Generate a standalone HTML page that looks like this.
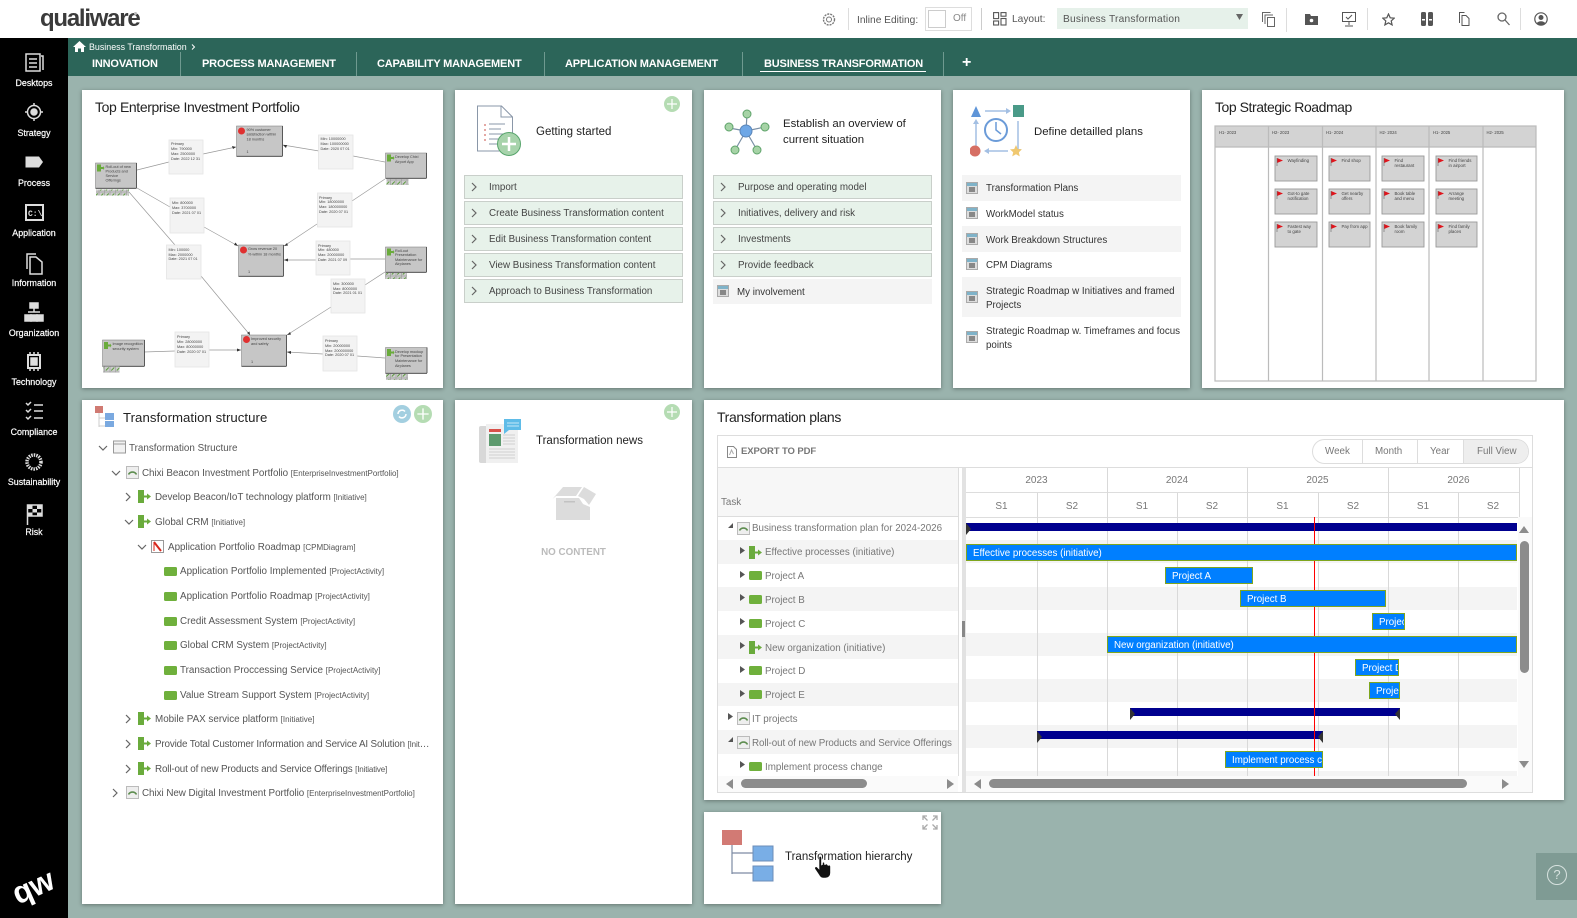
<!DOCTYPE html>
<html><head><meta charset="utf-8"><title>Qualiware</title>
<style>
html,body{margin:0;padding:0;width:1577px;height:918px;overflow:hidden;background:#9ab3ad;font-family:"Liberation Sans",sans-serif}
.a,.t,.c,.bar,.sb{position:absolute}
.t{white-space:nowrap;line-height:14px;height:14px}
.c{background:#fff;box-shadow:0 1px 4px rgba(0,0,0,.35)}
.side{color:#fff;font-size:8.9px;width:68px;left:0;text-align:center;-webkit-text-stroke:.2px #fff}
.tab{color:#fff;font-weight:bold;font-size:11px;top:56px;letter-spacing:-.17px;margin-top:1px}
.sep{position:absolute;width:1px;background:#6f9a90}
.h{font-size:14px;color:#222;letter-spacing:-.38px}
.h2{font-size:11.4px;color:#222;margin-top:1px}
.r{position:absolute;height:22px;background:#e7f2ea;border:1px solid #c9cfca;box-sizing:content-box}
.rt{font-size:9.8px;color:#444;margin-top:1px}
.l{font-size:9.75px;color:#333;margin-top:1px}
.tr{font-size:9.85px;color:#555;margin-top:1px}
.tr small{font-size:8px;color:#555}
.g{font-size:9.8px;color:#777;margin-top:1px}
.bar{background:#007fff;border:1px solid #7fa61e;box-sizing:border-box;color:#fff;font-size:9.75px;line-height:17px;padding-left:6px;overflow:hidden;white-space:nowrap;height:17px}
.sum{position:absolute;background:#00008f;height:8px}
.sb{background:#8c8c8c;border-radius:5px}
.band{position:absolute;left:718px;width:799px;height:23px;background:#f4f4f4}
.vl{position:absolute;width:1px;background:#d9d9d9}
.hd{font-size:10px;color:#777;text-align:center}
</style></head><body>
<svg width="0" height="0" style="position:absolute"><defs>
<symbol id="ch" viewBox="0 0 8 10"><path d="M2 1l4 4-4 4" fill="none" stroke="#666" stroke-width="1.2"/></symbol>
<symbol id="chd" viewBox="0 0 10 8"><path d="M1 2l4 4 4-4" fill="none" stroke="#666" stroke-width="1.2"/></symbol>
<symbol id="ini" viewBox="0 0 13 13"><rect x="0" y="0" width="6" height="13" fill="#6aab3c"/><rect x="6" y="5.5" width="4" height="2" fill="#6aab3c"/><path d="M9 3.5l4 3-4 3z" fill="#6aab3c"/></symbol>
<symbol id="act" viewBox="0 0 13 9"><rect x="0" y="0" width="13" height="9" rx="1.5" fill="#6fb03c"/></symbol>
<symbol id="pf" viewBox="0 0 13 13"><rect x=".5" y=".5" width="12" height="12" fill="#eee" stroke="#bbb"/><path d="M2.5 8.5a4.5 4.5 0 0 1 8 0" fill="none" stroke="#5e8d50" stroke-width="1.6"/></symbol>
<symbol id="cal" viewBox="0 0 12 12"><rect x=".5" y=".5" width="11" height="11" fill="#ddd" stroke="#aaa"/><rect x="1" y="1" width="10" height="3" fill="#7fb3c9"/><rect x="3" y="5" width="6" height="5" fill="#888"/></symbol>
<symbol id="plus" viewBox="0 0 16 16"><circle cx="8" cy="8" r="8" fill="#b5dcb3"/><path d="M8 3v10M3 8h10" stroke="#fff" stroke-width="1.2"/></symbol>
<pattern id="tags" width="5.5" height="6" patternUnits="userSpaceOnUse"><rect width="5.5" height="6" fill="#ccc" stroke="#999" stroke-width=".6"/><path d="M1.3 4.5l3-3" stroke="#5a9a3c" stroke-width=".9"/></pattern>
</defs></svg>

<!-- top bar -->
<div class="a" style="left:0;top:0;width:1577px;height:38px;background:#fff"></div>
<div class="t" style="left:40px;top:4px;height:30px;line-height:30px;font-size:24px;font-weight:bold;color:#3b3b3b;letter-spacing:-1.25px">qualiware</div>
<div class="a" style="left:134px;top:12px;width:3px;height:3px;border-radius:50%;background:#bbb"></div>
<svg class="a" style="left:822px;top:12px" width="14" height="15"><circle cx="7" cy="7.5" r="5.5" fill="none" stroke="#777" stroke-width="1.4" stroke-dasharray="2 1"/><circle cx="7" cy="7.5" r="2.5" fill="none" stroke="#777"/></svg>
<div class="a" style="left:848px;top:8px;width:1px;height:22px;background:#ddd"></div>
<div class="t" style="left:857px;top:14px;font-size:10.2px;color:#555">Inline Editing:</div>
<div class="a" style="left:925px;top:7px;width:47px;height:24px;border:1px solid #ddd;box-sizing:border-box"></div>
<div class="a" style="left:928px;top:10px;width:18px;height:18px;border:1px solid #ccc;box-sizing:border-box"></div>
<div class="t" style="left:953px;top:12px;font-size:10px;color:#888">Off</div>
<div class="a" style="left:981px;top:8px;width:1px;height:22px;background:#ccc"></div>
<svg class="a" style="left:993px;top:12px" width="14" height="15" fill="none" stroke="#555" stroke-width="1.1"><rect x=".6" y=".6" width="5" height="6"/><rect x="8" y=".6" width="5" height="3.6"/><rect x=".6" y="9" width="5" height="4"/><rect x="8" y="6.5" width="5" height="6.5"/></svg>
<div class="t" style="left:1012px;top:13px;font-size:10.2px;color:#555">Layout:</div>
<div class="a" style="left:1057px;top:8px;width:191px;height:21px;background:#e6f1ea"></div>
<div class="t" style="left:1063px;top:13px;font-size:10.2px;color:#555;letter-spacing:.22px">Business Transformation</div>
<svg class="a" style="left:1236px;top:14px" width="7" height="6"><path d="M0 0h7l-3.500 6z" fill="#666"/></svg>
<svg class="a" style="left:1262px;top:12px" width="14" height="16" fill="none" stroke="#666"><path d="M.5 10V.5h8M3 12V3h8M5.500 5.500h7v9h-7z"/></svg>
<div class="a" style="left:1286px;top:8px;width:1px;height:24px;background:#ddd"></div>
<svg class="a" style="left:1305px;top:13px" width="13" height="12"><path d="M0 1h5l1 2h7v9H0z" fill="#555"/><circle cx="6.500" cy="7.500" r="1.800" fill="#fff"/></svg>
<svg class="a" style="left:1342px;top:12px" width="14" height="15" fill="none" stroke="#555"><rect x=".5" y=".5" width="13" height="9"/><path d="M4 5l2 2 4-4M7 10v3M3 14h8"/></svg>
<div class="a" style="left:1367px;top:8px;width:1px;height:22px;background:#ddd"></div>
<svg class="a" style="left:1382px;top:13px" width="13" height="13" fill="none" stroke="#555" stroke-width="1.200"><path d="M6.500 1l1.700 3.800 4 .4-3 2.700.9 4-3.600-2.100-3.600 2.100.9-4-3-2.700 4-.4z"/></svg>
<svg class="a" style="left:1421px;top:12px" width="12" height="14"><rect x="0" y="0" width="5" height="14" rx="1.500" fill="#555"/><rect x="7" y="0" width="5" height="14" rx="1.500" fill="#555"/><rect x="1" y="7" width="3" height="1.500" fill="#fff"/><rect x="8" y="7" width="3" height="1.500" fill="#fff"/></svg>
<svg class="a" style="left:1459px;top:12px" width="11" height="14" fill="none" stroke="#555"><path d="M.5 11V.5h5M3 3.500h4l3 3v7H3z"/></svg>
<svg class="a" style="left:1497px;top:12px" width="13" height="14" fill="none" stroke="#666" stroke-width="1.300"><circle cx="5" cy="5" r="4"/><path d="M8 8l4.500 5"/></svg>
<div class="a" style="left:1520px;top:8px;width:1px;height:22px;background:#ddd"></div>
<svg class="a" style="left:1534px;top:12px" width="14" height="14"><circle cx="7" cy="7" r="6.200" fill="none" stroke="#555" stroke-width="1.200"/><circle cx="7" cy="5.500" r="2.500" fill="#555"/><path d="M2.500 11.500a5 4 0 0 1 9 0a6 6 0 0 1-9 0z" fill="#555"/></svg>

<!-- tab bar -->
<div class="a" style="left:68px;top:38px;width:1509px;height:38px;background:#2c6559"></div>
<svg class="a" style="left:73px;top:41px" width="13" height="11"><path d="M6.500 0L13 6h-2v5H8V7.500H5V11H2V6H0z" fill="#fff"/></svg>
<div class="t" style="left:89px;top:40px;font-size:8.9px;color:#fff">Business Transformation</div>
<svg class="a" style="left:191px;top:44px" width="5" height="6"><path d="M1 .5l2.500 2.500L1 5.500" fill="none" stroke="#fff"/></svg>
<div class="t tab" style="left:92px">INNOVATION</div>
<div class="sep" style="left:180px;top:52px;height:24px"></div>
<div class="t tab" style="left:202px">PROCESS MANAGEMENT</div>
<div class="sep" style="left:356px;top:52px;height:24px"></div>
<div class="t tab" style="left:377px">CAPABILITY MANAGEMENT</div>
<div class="sep" style="left:544px;top:52px;height:24px"></div>
<div class="t tab" style="left:565px">APPLICATION MANAGEMENT</div>
<div class="sep" style="left:742px;top:52px;height:24px"></div>
<div class="t tab" style="left:764px">BUSINESS TRANSFORMATION</div>
<div class="a" style="left:760px;top:71px;width:166px;height:1px;background:#fff"></div>
<div class="sep" style="left:943px;top:52px;height:24px"></div>
<div class="t" style="left:962px;top:56px;font-size:16px;font-weight:bold;color:#fff">+</div>

<!-- sidebar -->
<div class="a" style="left:0;top:38px;width:68px;height:880px;background:#000"></div>
<svg class="a" style="left:0;top:38px" width="68" height="500" fill="none" stroke="#ddd" stroke-width="1.500">
<rect x="26" y="16" width="14" height="17"/><path d="M29 21h8M29 25h8M29 29h8M41 18h2v14" />
<circle cx="34" cy="74" r="6.500"/><circle cx="34" cy="74" r="3" fill="#ddd"/><path d="M34 65v2M34 81v2M25 74h2M41 74h2"/>
<path d="M25.500 118.500h13.500l4 5.500-4 5.500h-13.500z" fill="#ddd" stroke="none"/>
<rect x="26" y="167" width="17" height="15" stroke-width="2"/><text x="28" y="178" font-size="8" font-weight="bold" fill="#ddd" stroke="none" font-family="Liberation Mono">C:\</text>
<path d="M27 231v-15h9M30 219h6l6 5v12H30z"/>
<rect x="30" y="265" width="8" height="5" fill="#ddd"/><path d="M34 270v4M28 274h12"/><rect x="25" y="277" width="6" height="6" fill="#ddd"/><rect x="31" y="277" width="6" height="6" fill="#ddd"/><rect x="37" y="277" width="6" height="6" fill="#ddd"/>
<rect x="28" y="317" width="12" height="13" stroke-width="2"/><rect x="31" y="320" width="6" height="7" fill="#ddd"/><path d="M30 314v2M34 314v2M38 314v2M30 331v2M34 331v2M38 331v2"/>
<path d="M26 365l2 2 3-3M26 372l2 2 3-3M26 379l2 2 3-3M34 367h9M34 373h9M34 380h9"/>
<circle cx="34" cy="424" r="7" stroke-width="3.500" stroke-dasharray="1.500 1"/>
<path d="M27.500 487v-20h14.500v11h-14" /><path d="M28 467h4.500v4H28zM37 467h4.500v4H37zM32.500 471H37v3.500h-4.500zM28 474.500h4.500v3.500H28zM37 474.500h4.500v3.500H37z" fill="#ddd" stroke="none"/>
</svg>
<div class="t side" style="top:76px">Desktops</div>
<div class="t side" style="top:126px">Strategy</div>
<div class="t side" style="top:176px">Process</div>
<div class="t side" style="top:226px">Application</div>
<div class="t side" style="top:276px">Information</div>
<div class="t side" style="top:326px">Organization</div>
<div class="t side" style="top:375px">Technology</div>
<div class="t side" style="top:425px">Compliance</div>
<div class="t side" style="top:475px">Sustainability</div>
<div class="t side" style="top:525px">Risk</div>
<div class="t" style="left:12px;top:869px;height:36px;line-height:36px;font-size:31px;font-weight:bold;color:#fff;transform:rotate(-24deg);letter-spacing:-.5px">qw</div>

<!-- Cards -->
<div class="c" style="left:82px;top:90px;width:361px;height:298px"></div>
<div class="c" style="left:455px;top:90px;width:237px;height:298px"></div>
<div class="c" style="left:704px;top:90px;width:237px;height:298px"></div>
<div class="c" style="left:953px;top:90px;width:237px;height:298px"></div>
<div class="c" style="left:1202px;top:90px;width:362px;height:298px"></div>
<div class="c" style="left:82px;top:400px;width:361px;height:504px"></div>
<div class="c" style="left:455px;top:400px;width:237px;height:504px"></div>
<div class="c" style="left:704px;top:400px;width:860px;height:400px"></div>
<div class="c" style="left:704px;top:812px;width:237px;height:92px"></div>

<!-- Card 1 -->
<div class="t h" style="left:95px;top:100px">Top Enterprise Investment Portfolio</div>
<svg class="a" style="left:0;top:0" width="450" height="390" font-family="Liberation Sans" font-size="3.800" fill="#444">
<g stroke="#999" stroke-width=".7" fill="none">
<path d="M137 170L169 162M203 154L236 147M319 151L283 145M385 162L353 156M137 188L170 207M204 227L238 246M129 192L175 245M201 276L250 335M385 179L352 201M317 224L284 246M385 259L350 259M316 260L284 260M385 272L365 285M331 307L287 335M144 352L175 351M209 350L241 350M385 358L357 356M323 354L287 352"/>
</g>
<g fill="#333"><path d="M236 147l-4-1 1 3zM283 145l4 0-1 3zM238 246l-4-1 1.500-2.500zM250 335l-3-2 2.500-1.500zM284 246l3-3 1 2.500zM284 260l4-1.500v3zM287 335l3-3 1 2.500zM241 350l-4-1.500v3zM287 352l4-1v3z"/></g>
<g fill="#f3f3f3" stroke="#e4e4e4" stroke-width=".8">
<rect x="169" y="140" width="34" height="34"/><rect x="170" y="198" width="34" height="35"/><rect x="166.500" y="245" width="34.500" height="34"/><rect x="318.500" y="135" width="34.500" height="34"/><rect x="317.500" y="193" width="34.500" height="34"/><rect x="316" y="241" width="34" height="34"/><rect x="331" y="279" width="34" height="34"/><rect x="175" y="332" width="34" height="35"/><rect x="323" y="336" width="34" height="35"/>
</g>
<g>
<text x="171" y="145">Primary</text><text x="171" y="150">Min: 790000</text><text x="171" y="155">Max: 2500000</text><text x="171" y="160">Date: 2022 12 31</text>
<text x="172" y="204">Min: 800000</text><text x="172" y="209">Max: 3700000</text><text x="172" y="214">Date: 2021 07 01</text>
<text x="168.500" y="251">Min: 100000</text><text x="168.500" y="256">Max: 2000000</text><text x="168.500" y="260">Date: 2021 07 01</text>
<text x="320.500" y="140">Min: 10000000</text><text x="320.500" y="145">Max: 100000000</text><text x="320.500" y="150">Date: 2020 07 01</text>
<text x="319" y="199">Primary</text><text x="319" y="203">Min: 18000000</text><text x="319" y="208">Max: 180000000</text><text x="319" y="213">Date: 2020 07 01</text>
<text x="318" y="247">Primary</text><text x="318" y="251">Min: 480000</text><text x="318" y="256">Max: 20000000</text><text x="318" y="261">Date: 2021 07 09</text>
<text x="333" y="285">Min: 300000</text><text x="333" y="290">Max: 8000000</text><text x="333" y="294">Date: 2021 01 01</text>
<text x="177" y="338">Primary</text><text x="177" y="343">Min: 28000000</text><text x="177" y="348">Max: 80000000</text><text x="177" y="353">Date: 2020 07 01</text>
<text x="325" y="342">Primary</text><text x="325" y="347">Min: 20000000</text><text x="325" y="352">Max: 200000000</text><text x="325" y="356">Date: 2020 07 01</text>
</g>
<g fill="#c6c6c6" stroke="#777" stroke-width=".5">
<rect x="95.500" y="163" width="41" height="25"/><rect x="236.500" y="126" width="46" height="30"/><rect x="385.500" y="153" width="41" height="25"/><rect x="238.500" y="245" width="45" height="31"/><rect x="385.500" y="247" width="41" height="25"/><rect x="241.500" y="335" width="45" height="31"/><rect x="102.500" y="340" width="42" height="26"/><rect x="385.500" y="347.500" width="41.500" height="25.500"/>
</g>
<g stroke="#444" stroke-width=".8"><path d="M95.500 188.500h41M236.500 156.500h46M385.500 178.500h41M238.500 276.500h45M385.500 272.500h41M241.500 366.500h45M102.500 366.500h42M385.500 373.500h41.500M136.500 163v25M282.500 126v30M426.500 153v25M283.500 245v31M426.500 247v25M286.500 335v31M144.500 340v26M427 347.500v25.500"/></g>
<g fill="url(#tags)"><rect x="96" y="189.500" width="33" height="6"/><rect x="386.500" y="179" width="22" height="6"/><rect x="385" y="273" width="22" height="6"/><rect x="103" y="366.500" width="16.500" height="6"/><rect x="386" y="374" width="22" height="6"/></g>
<g fill="#6aab3c"><rect x="97" y="164.500" width="4" height="7"/><path d="M101 167h2v-1l1.500 2-1.500 2v-1h-2z"/><rect x="387" y="154.500" width="4" height="7"/><path d="M391 157h2v-1l1.500 2-1.500 2v-1h-2z"/><rect x="387" y="248.500" width="4" height="7"/><path d="M391 251h2v-1l1.500 2-1.500 2v-1h-2z"/><rect x="104" y="342" width="4" height="7"/><path d="M108 344.500h2v-1l1.500 2-1.500 2v-1h-2z"/><rect x="387" y="349" width="4" height="7"/><path d="M391 351.500h2v-1l1.500 2-1.500 2v-1h-2z"/></g>
<g fill="#e03030"><circle cx="241.500" cy="131" r="3.500"/><circle cx="243.500" cy="250" r="3.500"/><circle cx="246.500" cy="339.500" r="3.500"/></g>
<g>
<text x="105.500" y="168">Roll-out of new</text><text x="105.500" y="172.500">Products and</text><text x="105.500" y="177">Service</text><text x="105.500" y="181.500">Offerings</text>
<text x="246.500" y="131">90% customer</text><text x="246.500" y="135.500">satisfaction within</text><text x="246.500" y="140.500">18 months</text><text x="246.500" y="153">1</text>
<text x="395" y="158">Develop Chixi</text><text x="395" y="163">Airport App</text>
<text x="248" y="250">Grow revenue 20</text><text x="248" y="255.500">% within 18 months</text><text x="248" y="273">1</text>
<text x="395" y="252">Roll-out</text><text x="395" y="256">Presentation</text><text x="395" y="261">Maintenance for</text><text x="395" y="265">Airplanes</text>
<text x="251" y="340">Improved security</text><text x="251" y="345">and safety</text><text x="251" y="363">1</text>
<text x="112.500" y="345">Image recognition</text><text x="112.500" y="350">security system</text>
<text x="395" y="353">Develop mockup</text><text x="395" y="357">for Presentation</text><text x="395" y="362">Maintenance for</text><text x="395" y="367">Airplanes</text>
</g>
</svg>

<!-- Card 2 -->
<svg class="a" style="left:477px;top:105px" width="44" height="52"><path d="M.5 1h24l11 11v34H.5z" fill="#fff" stroke="#8a97a8" stroke-width="1"/><path d="M24 1v11h11" fill="none" stroke="#8a97a8"/><path d="M12 19h16M12 24h12M12 29h16M12 34h12M12 39h16" stroke="#8a97a8"/><path d="M8 19v2M8 24v2M8 29v2M8 34v2" stroke="#c9504a"/><circle cx="32" cy="39" r="11.500" fill="#a7d3ab" stroke="#58a56c"/><path d="M32 32v14M25 39h14" stroke="#fff" stroke-width="2.500"/></svg>
<div class="t h2" style="left:536px;top:124px;font-size:11.5px">Getting started</div>
<svg class="a" style="left:664px;top:96px" width="16" height="16"><use href="#plus"/></svg>

<div class="r" style="left:464px;top:175px;width:217px"></div>
<div class="r" style="left:464px;top:201px;width:217px"></div>
<div class="r" style="left:464px;top:227px;width:217px"></div>
<div class="r" style="left:464px;top:253px;width:217px"></div>
<div class="r" style="left:464px;top:279px;width:217px"></div>
<svg class="a" style="left:470px;top:182px" width="8" height="10"><use href="#ch"/></svg>
<svg class="a" style="left:470px;top:208px" width="8" height="10"><use href="#ch"/></svg>
<svg class="a" style="left:470px;top:234px" width="8" height="10"><use href="#ch"/></svg>
<svg class="a" style="left:470px;top:260px" width="8" height="10"><use href="#ch"/></svg>
<svg class="a" style="left:470px;top:286px" width="8" height="10"><use href="#ch"/></svg>
<div class="t rt" style="left:489px;top:180px">Import</div>
<div class="t rt" style="left:489px;top:206px">Create Business Transformation content</div>
<div class="t rt" style="left:489px;top:232px">Edit Business Transformation content</div>
<div class="t rt" style="left:489px;top:258px">View Business Transformation content</div>
<div class="t rt" style="left:489px;top:284px">Approach to Business Transformation</div>

<!-- Card 3 -->
<svg class="a" style="left:722px;top:106px" width="50" height="50"><path d="M24 25L25 8M24 25L7 22M24 25L43 21M24 25L13 44M24 25L35 44" stroke="#7a8fa5" stroke-width="1.200"/><g fill="#a6d3a6" stroke="#5ea36a"><circle cx="25" cy="8" r="4"/><circle cx="7" cy="21" r="4"/><circle cx="43" cy="21" r="4"/><circle cx="13" cy="44" r="4"/><circle cx="35" cy="44" r="4"/></g><circle cx="24" cy="25" r="6" fill="#6ea7e6" stroke="#5a85b8"/></svg>
<div class="t h2" style="left:783px;top:116px">Establish an overview of</div>
<div class="t h2" style="left:783px;top:132px">current situation</div>
<div class="r" style="left:713px;top:175px;width:217px"></div>
<div class="r" style="left:713px;top:201px;width:217px"></div>
<div class="r" style="left:713px;top:227px;width:217px"></div>
<div class="r" style="left:713px;top:253px;width:217px"></div>
<svg class="a" style="left:719px;top:182px" width="8" height="10"><use href="#ch"/></svg>
<svg class="a" style="left:719px;top:208px" width="8" height="10"><use href="#ch"/></svg>
<svg class="a" style="left:719px;top:234px" width="8" height="10"><use href="#ch"/></svg>
<svg class="a" style="left:719px;top:260px" width="8" height="10"><use href="#ch"/></svg>
<div class="t rt" style="left:738px;top:180px">Purpose and operating model</div>
<div class="t rt" style="left:738px;top:206px">Initiatives, delivery and risk</div>
<div class="t rt" style="left:738px;top:232px">Investments</div>
<div class="t rt" style="left:738px;top:258px">Provide feedback</div>
<div class="a" style="left:713px;top:279px;width:219px;height:25px;background:#f4f4f4"></div>
<svg class="a" style="left:717px;top:285px" width="12" height="12"><use href="#cal"/></svg>
<div class="t l" style="left:737px;top:285px">My involvement</div>

<!-- Card 4 -->
<svg class="a" style="left:970px;top:104px" width="54" height="56" fill="none"><path d="M6 2l5 11H1z" fill="#5f95d8"/><rect x="43" y="1" width="11" height="12" fill="#4a9a88"/><path d="M15 7h22" stroke="#a3bfe3" stroke-width="1.500"/><path d="M36 4l5 3-5 3z" fill="#a3bfe3"/><path d="M6 48V19" stroke="#a3bfe3" stroke-width="1.500"/><path d="M3 20l3-5 3 5z" fill="#a3bfe3"/><path d="M48 17v29" stroke="#a3bfe3" stroke-width="1.500"/><path d="M45 45l3 5 3-5z" fill="#a3bfe3"/><path d="M18 47h20" stroke="#a3bfe3" stroke-width="1.500"/><path d="M19 44l-5 3 5 3z" fill="#a3bfe3"/><circle cx="5" cy="47" r="5.500" fill="#d66f64"/><path d="M46 41l1.800 4 4.200.4-3.200 2.800 1 4.200-3.800-2.200-3.800 2.200 1-4.200-3.200-2.800 4.200-.4z" fill="#f0c870"/><circle cx="26" cy="26" r="11" stroke="#6b9bd8" stroke-width="2"/><path d="M26 18v8l5 4" stroke="#6b9bd8" stroke-width="1.500"/></svg>
<div class="t h2" style="left:1034px;top:124px">Define detailled plans</div>
<div class="a" style="left:962px;top:175px;width:219px;height:26px;background:#f4f4f4"></div>
<div class="a" style="left:962px;top:226px;width:219px;height:26px;background:#f4f4f4"></div>
<div class="a" style="left:962px;top:277px;width:219px;height:40px;background:#f4f4f4"></div>
<svg class="a" style="left:966px;top:182px" width="12" height="12"><use href="#cal"/></svg>
<svg class="a" style="left:966px;top:207px" width="12" height="12"><use href="#cal"/></svg>
<svg class="a" style="left:966px;top:233px" width="12" height="12"><use href="#cal"/></svg>
<svg class="a" style="left:966px;top:258px" width="12" height="12"><use href="#cal"/></svg>
<svg class="a" style="left:966px;top:291px" width="12" height="12"><use href="#cal"/></svg>
<svg class="a" style="left:966px;top:331px" width="12" height="12"><use href="#cal"/></svg>
<div class="t l" style="left:986px;top:181px">Transformation Plans</div>
<div class="t l" style="left:986px;top:207px">WorkModel status</div>
<div class="t l" style="left:986px;top:233px">Work Breakdown Structures</div>
<div class="t l" style="left:986px;top:258px">CPM Diagrams</div>
<div class="t l" style="left:986px;top:284px">Strategic Roadmap w Initiatives and framed</div>
<div class="t l" style="left:986px;top:298px">Projects</div>
<div class="t l" style="left:986px;top:324px">Strategic Roadmap w. Timeframes and focus</div>
<div class="t l" style="left:986px;top:338px">points</div>

<!-- Card 5 -->
<div class="t h" style="left:1215px;top:100px;letter-spacing:-.45px">Top Strategic Roadmap</div>
<svg class="a" style="left:1214px;top:125px" width="326" height="260" font-family="Liberation Sans" font-size="4.400" fill="#444">
<rect x="1" y="1" width="321" height="21" fill="#d3d3d3"/>
<rect x="1" y="1" width="321" height="255" fill="none" stroke="#bbb" stroke-width="1.200"/>
<path d="M1 22h321M54.500 1v255M108.500 1v255M162 1v255M215 1v255M269 1v255" stroke="#bbb" stroke-width="1.200"/>
<g font-size="4.200"><text x="5" y="9">H1- 2023</text><text x="58" y="9">H2- 2023</text><text x="112" y="9">H1- 2024</text><text x="165.500" y="9">H2- 2024</text><text x="219" y="9">H1- 2025</text><text x="272.500" y="9">H2- 2025</text></g>
<g fill="#d3d3d3" stroke="#999" stroke-width=".9">
<rect x="61" y="31" width="42" height="25"/><rect x="115" y="31" width="41" height="25"/><rect x="168" y="31" width="42" height="25"/><rect x="222" y="31" width="41" height="25"/>
<rect x="61" y="64" width="42" height="25"/><rect x="115" y="64" width="41" height="25"/><rect x="168" y="64" width="42" height="25"/><rect x="222" y="64" width="41" height="25"/>
<rect x="61" y="97" width="42" height="25"/><rect x="115" y="97" width="41" height="25"/><rect x="168" y="97" width="42" height="25"/><rect x="222" y="97" width="41" height="25"/>
</g>
<g fill="#e0141c"><path d="M63 33l6 2.500-6 2.500zM117 33l6 2.500-6 2.500zM170 33l6 2.500-6 2.500zM224 33l6 2.500-6 2.500zM63 66l6 2.500-6 2.500zM117 66l6 2.500-6 2.500zM170 66l6 2.500-6 2.500zM224 66l6 2.500-6 2.500zM63 99l6 2.500-6 2.500zM117 99l6 2.500-6 2.500zM170 99l6 2.500-6 2.500zM224 99l6 2.500-6 2.500z"/></g>
<path d="M63 33v8M117 33v8M170 33v8M224 33v8M63 66v8M117 66v8M170 66v8M224 66v8M63 99v8M117 99v8M170 99v8M224 99v8" stroke="#666" stroke-width=".6"/>
<g transform="translate(2.500 0)">
<text x="71" y="37">Wayfinding</text><text x="125" y="37">Find shop</text><text x="178" y="37">Find</text><text x="178" y="42">restaurant</text><text x="232" y="37">Find friends</text><text x="232" y="42">in airport</text>
<text x="71" y="70">Got-to gate</text><text x="71" y="75">notification</text><text x="125" y="70">Get nearby</text><text x="125" y="75">offers</text><text x="178" y="70">Book table</text><text x="178" y="75">and menu</text><text x="232" y="70">Arrange</text><text x="232" y="75">meeting</text>
<text x="71" y="103">Fastest way</text><text x="71" y="108">to gate</text><text x="125" y="103">Pay from app</text><text x="178" y="103">Book family</text><text x="178" y="108">room</text><text x="232" y="103">Find family</text><text x="232" y="108">places</text>
</g>
</svg>

<!-- Card 6 tree -->
<svg class="a" style="left:95px;top:406px" width="22" height="22"><rect x="0" y="0" width="8" height="7" fill="#d07a72"/><path d="M4 7v14M4 12h6M4 20h6" stroke="#ccc"/><rect x="10" y="7" width="9" height="7" fill="#7aa9e0"/><rect x="10" y="15" width="9" height="6" fill="#7aa9e0"/></svg>
<div class="t h" style="left:123px;top:411px;font-size:13.2px;letter-spacing:.05px">Transformation structure</div>
<svg class="a" style="left:393px;top:405px" width="18" height="18"><circle cx="9" cy="9" r="9" fill="#a3cfe0"/><path d="M5 9a4 4 0 0 1 7-2.500M13 9a4 4 0 0 1-7 2.500" fill="none" stroke="#fff" stroke-width="1.500"/></svg>
<svg class="a" style="left:414px;top:405px" width="18" height="18"><use href="#plus"/></svg>

<svg class="a" style="left:98px;top:444px" width="10" height="8"><use href="#chd"/></svg>
<svg class="a" style="left:113px;top:440px" width="14" height="14" fill="none" stroke="#999"><rect x=".5" y="1" width="12" height="12" fill="#f2f2f2"/><path d="M.5 4h12"/></svg>
<div class="t tr" style="left:129px;top:441px">Transformation Structure</div>

<svg class="a" style="left:111px;top:469px" width="10" height="8"><use href="#chd"/></svg>
<svg class="a" style="left:126px;top:466px" width="13" height="13"><use href="#pf"/></svg>
<div class="t tr" style="left:142px;top:466px;letter-spacing:-.05px">Chixi Beacon Investment Portfolio <small>[EnterpriseInvestmentPortfolio]</small></div>

<svg class="a" style="left:124px;top:492px" width="8" height="10"><use href="#ch"/></svg>
<svg class="a" style="left:138px;top:490px" width="13" height="13"><use href="#ini"/></svg>
<div class="t tr" style="left:155px;top:490px;letter-spacing:-.05px">Develop Beacon/IoT technology platform <small>[Initiative]</small></div>

<svg class="a" style="left:124px;top:518px" width="10" height="8"><use href="#chd"/></svg>
<svg class="a" style="left:138px;top:515px" width="13" height="13"><use href="#ini"/></svg>
<div class="t tr" style="left:155px;top:515px">Global CRM <small>[Initiative]</small></div>

<svg class="a" style="left:137px;top:543px" width="10" height="8"><use href="#chd"/></svg>
<svg class="a" style="left:151px;top:540px" width="13" height="13"><rect x=".5" y=".5" width="12" height="12" fill="#fff" stroke="#999"/><path d="M3 2l7 9" stroke="#d8281e" stroke-width="2"/><path d="M3 11V2" stroke="#d8281e"/></svg>
<div class="t tr" style="left:168px;top:540px">Application Portfolio Roadmap <small>[CPMDiagram]</small></div>

<svg class="a" style="left:164px;top:567px" width="13" height="9"><use href="#act"/></svg>
<div class="t tr" style="left:180px;top:564px">Application Portfolio Implemented <small>[ProjectActivity]</small></div>
<svg class="a" style="left:164px;top:592px" width="13" height="9"><use href="#act"/></svg>
<div class="t tr" style="left:180px;top:589px">Application Portfolio Roadmap <small>[ProjectActivity]</small></div>
<svg class="a" style="left:164px;top:617px" width="13" height="9"><use href="#act"/></svg>
<div class="t tr" style="left:180px;top:614px">Credit Assessment System <small>[ProjectActivity]</small></div>
<svg class="a" style="left:164px;top:641px" width="13" height="9"><use href="#act"/></svg>
<div class="t tr" style="left:180px;top:638px">Global CRM System <small>[ProjectActivity]</small></div>
<svg class="a" style="left:164px;top:666px" width="13" height="9"><use href="#act"/></svg>
<div class="t tr" style="left:180px;top:663px">Transaction Proccessing Service <small>[ProjectActivity]</small></div>
<svg class="a" style="left:164px;top:691px" width="13" height="9"><use href="#act"/></svg>
<div class="t tr" style="left:180px;top:688px">Value Stream Support System <small>[ProjectActivity]</small></div>

<svg class="a" style="left:124px;top:714px" width="8" height="10"><use href="#ch"/></svg>
<svg class="a" style="left:138px;top:712px" width="13" height="13"><use href="#ini"/></svg>
<div class="t tr" style="left:155px;top:712px">Mobile PAX service platform <small>[Initiative]</small></div>

<svg class="a" style="left:124px;top:739px" width="8" height="10"><use href="#ch"/></svg>
<svg class="a" style="left:138px;top:737px" width="13" height="13"><use href="#ini"/></svg>
<div class="t tr" style="left:155px;top:737px;width:275px;height:16px;overflow:hidden;text-overflow:ellipsis;letter-spacing:-.15px">Provide Total Customer Information and Service AI Solution <small>[Initiative]</small></div>

<svg class="a" style="left:124px;top:764px" width="8" height="10"><use href="#ch"/></svg>
<svg class="a" style="left:138px;top:762px" width="13" height="13"><use href="#ini"/></svg>
<div class="t tr" style="left:155px;top:762px;letter-spacing:-.15px">Roll-out of new Products and Service Offerings <small>[Initiative]</small></div>

<svg class="a" style="left:111px;top:788px" width="8" height="10"><use href="#ch"/></svg>
<svg class="a" style="left:126px;top:786px" width="13" height="13"><use href="#pf"/></svg>
<div class="t tr" style="left:142px;top:786px;letter-spacing:-.05px">Chixi New Digital Investment Portfolio <small>[EnterpriseInvestmentPortfolio]</small></div>

<!-- News -->
<svg class="a" style="left:479px;top:418px" width="43" height="46"><rect x="0" y="8" width="10" height="37" rx="2" fill="#d8d8d8"/><rect x="7" y="6" width="32" height="39" fill="#f0f0f0"/><rect x="10" y="11" width="12" height="3" fill="#d8504a"/><rect x="10" y="16" width="12" height="12" fill="#5d9a6e"/><path d="M10 31h26M10 34h26M10 37h26M10 40h26M24 17h12M24 20h12M24 23h12M24 26h12" stroke="#d0d0d0"/><path d="M25 1h17v11H30l-5 4z" fill="#5fbce8"/><path d="M28 5h12M28 8h12" stroke="#c6e8f7"/></svg>
<div class="t h2" style="left:536px;top:433px;font-size:11.5px">Transformation news</div>
<svg class="a" style="left:664px;top:404px" width="16" height="16"><use href="#plus"/></svg>
<svg class="a" style="left:551px;top:485px" width="46" height="36" fill="#dcdcdc"><path d="M1.500 14L12 2H31L25 11H5z"/><path d="M33 2L45 9L38 20L33 14L27 11z"/><path d="M5 13H28L32 19L39 22V35H5z"/><rect x="13" y="16" width="11" height="1.500" fill="#c2c2c2"/></svg>
<div class="t" style="left:455px;width:237px;text-align:center;top:546px;font-size:9.800px;font-weight:bold;color:#bbb">NO CONTENT</div>

<!-- Plans -->
<div class="t h" style="left:717px;top:410px;letter-spacing:-.35px">Transformation plans</div>
<div class="a" style="left:717px;top:435px;width:816px;height:358px;border:1px solid #ddd;box-sizing:border-box;background:#fff"></div>
<div class="a" style="left:718px;top:467px;width:814px;height:1px;background:#ddd"></div>
<svg class="a" style="left:727px;top:446px" width="10" height="12" fill="none" stroke="#888"><path d="M.5.500h6l3 3v8h-9z"/><path d="M2.500 9l2-5 2 4" stroke="#aaa"/></svg>
<div class="t" style="left:741px;top:445px;font-size:9.500px;font-weight:bold;color:#777;letter-spacing:-.1px">EXPORT TO PDF</div>
<div class="a" style="left:1312px;top:439px;width:217px;height:25px;border:1px solid #ddd;border-radius:13px;box-sizing:border-box;overflow:hidden"><div class="a" style="left:151px;top:0;width:66px;height:25px;background:#eee"></div><div class="a" style="left:49px;top:0;width:1px;height:25px;background:#ddd"></div><div class="a" style="left:104px;top:0;width:1px;height:25px;background:#ddd"></div><div class="a" style="left:150px;top:0;width:1px;height:25px;background:#ddd"></div></div>
<div class="t" style="left:1325px;top:445px;font-size:9.800px;color:#777">Week</div>
<div class="t" style="left:1375px;top:445px;font-size:9.800px;color:#777">Month</div>
<div class="t" style="left:1430px;top:445px;font-size:9.800px;color:#777">Year</div>
<div class="t" style="left:1477px;top:445px;font-size:9.800px;color:#777">Full View</div>

<div class="a" style="left:718px;top:468px;width:240px;height:48px;background:#f7f7f7"></div>
<div class="a" style="left:718px;top:516px;width:240px;height:1px;background:#ddd"></div>
<div class="t" style="left:721px;top:496px;font-size:9.800px;color:#777">Task</div>
<div class="a" style="left:958px;top:468px;width:1px;height:308px;background:#ddd"></div>
<div class="a" style="left:962px;top:468px;width:4px;height:324px;background:#e2e2e2"></div>
<div class="a" style="left:962px;top:621px;width:3px;height:16px;background:#888"></div>

<div class="a" style="left:718px;top:540px;width:240px;height:24px;background:#f4f4f4"></div>
<div class="a" style="left:718px;top:587px;width:240px;height:24px;background:#f4f4f4"></div>
<div class="a" style="left:718px;top:635px;width:240px;height:24px;background:#f4f4f4"></div>
<div class="a" style="left:718px;top:683px;width:240px;height:23px;background:#f4f4f4"></div>
<div class="a" style="left:718px;top:730px;width:240px;height:24px;background:#f4f4f4"></div>
<div class="a" style="left:718px;top:754px;width:240px;height:22px;background:#fff"></div>

<svg class="a" style="left:718px;top:517px" width="240" height="259">
<g fill="#555">
<path d="M15 6v5h-5zM15 220v5h-5zM10 196l5 3.500-5 3.500z"/>
<path d="M22 30l5 3.500-5 3.500zM22 54l5 3.500-5 3.500zM22 77l5 3.500-5 3.500zM22 101l5 3.500-5 3.500zM22 125l5 3.500-5 3.500zM22 149l5 3.500-5 3.500zM22 173l5 3.500-5 3.500zM22 244l5 3.500-5 3.500z"/>
</g>
</svg>
<svg class="a" style="left:737px;top:522px" width="13" height="13"><use href="#pf"/></svg>
<svg class="a" style="left:749px;top:546px" width="13" height="13"><use href="#ini"/></svg>
<svg class="a" style="left:749px;top:571px" width="13" height="9"><use href="#act"/></svg>
<svg class="a" style="left:749px;top:595px" width="13" height="9"><use href="#act"/></svg>
<svg class="a" style="left:749px;top:619px" width="13" height="9"><use href="#act"/></svg>
<svg class="a" style="left:749px;top:641px" width="13" height="13"><use href="#ini"/></svg>
<svg class="a" style="left:749px;top:666px" width="13" height="9"><use href="#act"/></svg>
<svg class="a" style="left:749px;top:690px" width="13" height="9"><use href="#act"/></svg>
<svg class="a" style="left:737px;top:712px" width="13" height="13"><use href="#pf"/></svg>
<svg class="a" style="left:737px;top:736px" width="13" height="13"><use href="#pf"/></svg>
<svg class="a" style="left:749px;top:762px" width="13" height="9"><use href="#act"/></svg>
<div class="t g" style="left:752px;top:521px">Business transformation plan for 2024-2026</div>
<div class="t g" style="left:765px;top:545px">Effective processes (initiative)</div>
<div class="t g" style="left:765px;top:569px">Project A</div>
<div class="t g" style="left:765px;top:593px">Project B</div>
<div class="t g" style="left:765px;top:617px">Project C</div>
<div class="t g" style="left:765px;top:641px">New organization (initiative)</div>
<div class="t g" style="left:765px;top:664px">Project D</div>
<div class="t g" style="left:765px;top:688px">Project E</div>
<div class="t g" style="left:752px;top:712px">IT projects</div>
<div class="t g" style="left:752px;top:736px;letter-spacing:-.08px">Roll-out of new Products and Service Offerings</div>
<div class="t g" style="left:765px;top:760px">Implement process change</div>

<!-- Chart -->
<div class="band" style="left:966px;width:551px;top:540px"></div>
<div class="band" style="left:966px;width:551px;top:587px"></div>
<div class="band" style="left:966px;width:551px;top:633px"></div>
<div class="band" style="left:966px;width:551px;top:679px"></div>
<div class="band" style="left:966px;width:551px;top:725px"></div>
<div class="band" style="left:966px;width:551px;top:771px;height:5px"></div>
<div class="a" style="left:966px;top:492px;width:553px;height:1px;background:#ddd"></div>
<div class="a" style="left:966px;top:517px;width:566px;height:1px;background:#ddd"></div>
<div class="vl" style="left:1107px;top:468px;height:308px"></div>
<div class="vl" style="left:1247px;top:468px;height:308px"></div>
<div class="vl" style="left:1388px;top:468px;height:308px"></div>
<div class="vl" style="left:1519px;top:468px;height:49px"></div>
<div class="vl" style="left:1037px;top:493px;height:283px"></div>
<div class="vl" style="left:1177px;top:493px;height:283px"></div>
<div class="vl" style="left:1318px;top:493px;height:283px"></div>
<div class="vl" style="left:1458px;top:493px;height:283px"></div>
<div class="t hd" style="left:966px;width:141px;top:474px">2023</div>
<div class="t hd" style="left:1107px;width:140px;top:474px">2024</div>
<div class="t hd" style="left:1247px;width:141px;top:474px">2025</div>
<div class="t hd" style="left:1388px;width:141px;top:474px">2026</div>
<div class="t hd" style="left:966px;width:71px;top:500px">S1</div>
<div class="t hd" style="left:1037px;width:70px;top:500px">S2</div>
<div class="t hd" style="left:1107px;width:70px;top:500px">S1</div>
<div class="t hd" style="left:1177px;width:70px;top:500px">S2</div>
<div class="t hd" style="left:1247px;width:71px;top:500px">S1</div>
<div class="t hd" style="left:1318px;width:70px;top:500px">S2</div>
<div class="t hd" style="left:1388px;width:70px;top:500px">S1</div>
<div class="t hd" style="left:1458px;width:70px;top:500px">S2</div>

<div class="sum" style="left:966px;top:523px;width:551px"></div>
<div class="sum" style="left:1130px;top:708px;width:270px"></div>
<div class="sum" style="left:1037px;top:731px;width:286px"></div>
<svg class="a" style="left:966px;top:523px" width="6" height="12"><path d="M0 0l5 6-5 6z" fill="#333"/></svg>
<svg class="a" style="left:1130px;top:708px" width="6" height="12"><path d="M0 0l5 6-5 6z" fill="#333"/></svg>
<svg class="a" style="left:1394px;top:708px" width="6" height="12"><path d="M6 0l-5 6 5 6z" fill="#333"/></svg>
<svg class="a" style="left:1037px;top:731px" width="6" height="12"><path d="M0 0l5 6-5 6z" fill="#333"/></svg>
<svg class="a" style="left:1317px;top:731px" width="6" height="12"><path d="M6 0l-5 6 5 6z" fill="#333"/></svg>
<div class="a" style="left:1314px;top:517px;width:1px;height:259px;background:#f00"></div>
<div class="bar" style="left:966px;top:544px;width:551px">Effective processes (initiative)</div>
<div class="bar" style="left:1165px;top:567px;width:88px">Project A</div>
<div class="bar" style="left:1240px;top:590px;width:146px">Project B</div>
<div class="bar" style="left:1372px;top:613px;width:33px">Project C</div>
<div class="bar" style="left:1107px;top:636px;width:410px">New organization (initiative)</div>
<div class="bar" style="left:1355px;top:659px;width:44px">Project D</div>
<div class="bar" style="left:1369px;top:682px;width:31px">Project E</div>
<div class="bar" style="left:1225px;top:751px;width:98px">Implement process change</div>

<!-- scrollbars -->
<div class="a" style="left:1518px;top:517px;width:14px;height:259px;background:#fafafa"></div>
<div class="a" style="left:718px;top:776px;width:240px;height:16px;background:#fafafa"></div>
<div class="a" style="left:966px;top:776px;width:566px;height:16px;background:#fafafa"></div>
<div class="sb" style="left:1520px;top:541px;width:9px;height:132px"></div>
<div class="sb" style="left:741px;top:779px;width:126px;height:9px"></div>
<div class="sb" style="left:989px;top:779px;width:478px;height:9px"></div>
<svg class="a" style="left:1519px;top:526px" width="10" height="7"><path d="M5 0l5 7H0z" fill="#8c8c8c"/></svg>
<svg class="a" style="left:1519px;top:761px" width="10" height="7"><path d="M5 7l5-7H0z" fill="#8c8c8c"/></svg>
<svg class="a" style="left:726px;top:779px" width="7" height="10"><path d="M0 5l7-5v10z" fill="#8c8c8c"/></svg>
<svg class="a" style="left:947px;top:779px" width="7" height="10"><path d="M7 5L0 0v10z" fill="#8c8c8c"/></svg>
<svg class="a" style="left:974px;top:779px" width="7" height="10"><path d="M0 5l7-5v10z" fill="#8c8c8c"/></svg>
<svg class="a" style="left:1502px;top:779px" width="7" height="10"><path d="M7 5L0 0v10z" fill="#8c8c8c"/></svg>

<!-- Hierarchy -->
<svg class="a" style="left:922px;top:815px" width="16" height="15" fill="none" stroke="#aaa" stroke-width="1.300"><path d="M1 5V1h4M11 1h4v4M15 10v4h-4M5 14H1v-4M1 1l4.500 4.500M15 1l-4.500 4.500M15 14l-4.500-4.500M1 14l4.500-4.500"/></svg>
<svg class="a" style="left:722px;top:830px" width="52" height="52"><path d="M10 15v29M10 23h21M10 43h21" stroke="#7d8ba3" stroke-width="1.200" fill="none"/><rect x="0" y="0" width="20" height="15" fill="#d27a74"/><rect x="31" y="16" width="20" height="15" fill="#79aee6" stroke="#6c8db8"/><rect x="31" y="36" width="20" height="15" fill="#79aee6" stroke="#6c8db8"/></svg>
<div class="t h2" style="left:785px;top:849px;font-size:11.5px">Transformation hierarchy</div>
<svg class="a" style="left:814px;top:856px" width="18" height="24"><path d="M5 1.500c0-1.500 2.500-1.500 2.500 0V9l1-.5V7c0-1 2-1 2 0v1.500l1 0c.5-1 2-.5 2 .5l1 .5c.5-1 2 0 2 1V17c0 3-2 5-5 5H9c-2 0-3-1-4-3L1 13c-1-1.500 1-3 2-2l2 2z" fill="#111" stroke="#fff" stroke-width=".6"/></svg>

<!-- Help -->
<div class="a" style="left:1536px;top:853px;width:41px;height:47px;background:#7f9b94"></div>
<div class="t" style="left:1547px;top:865px;width:18px;height:18px;border:1px solid #d7e2df;border-radius:50%;text-align:center;line-height:18px;font-size:13px;color:#d7e2df">?</div>
</body></html>
